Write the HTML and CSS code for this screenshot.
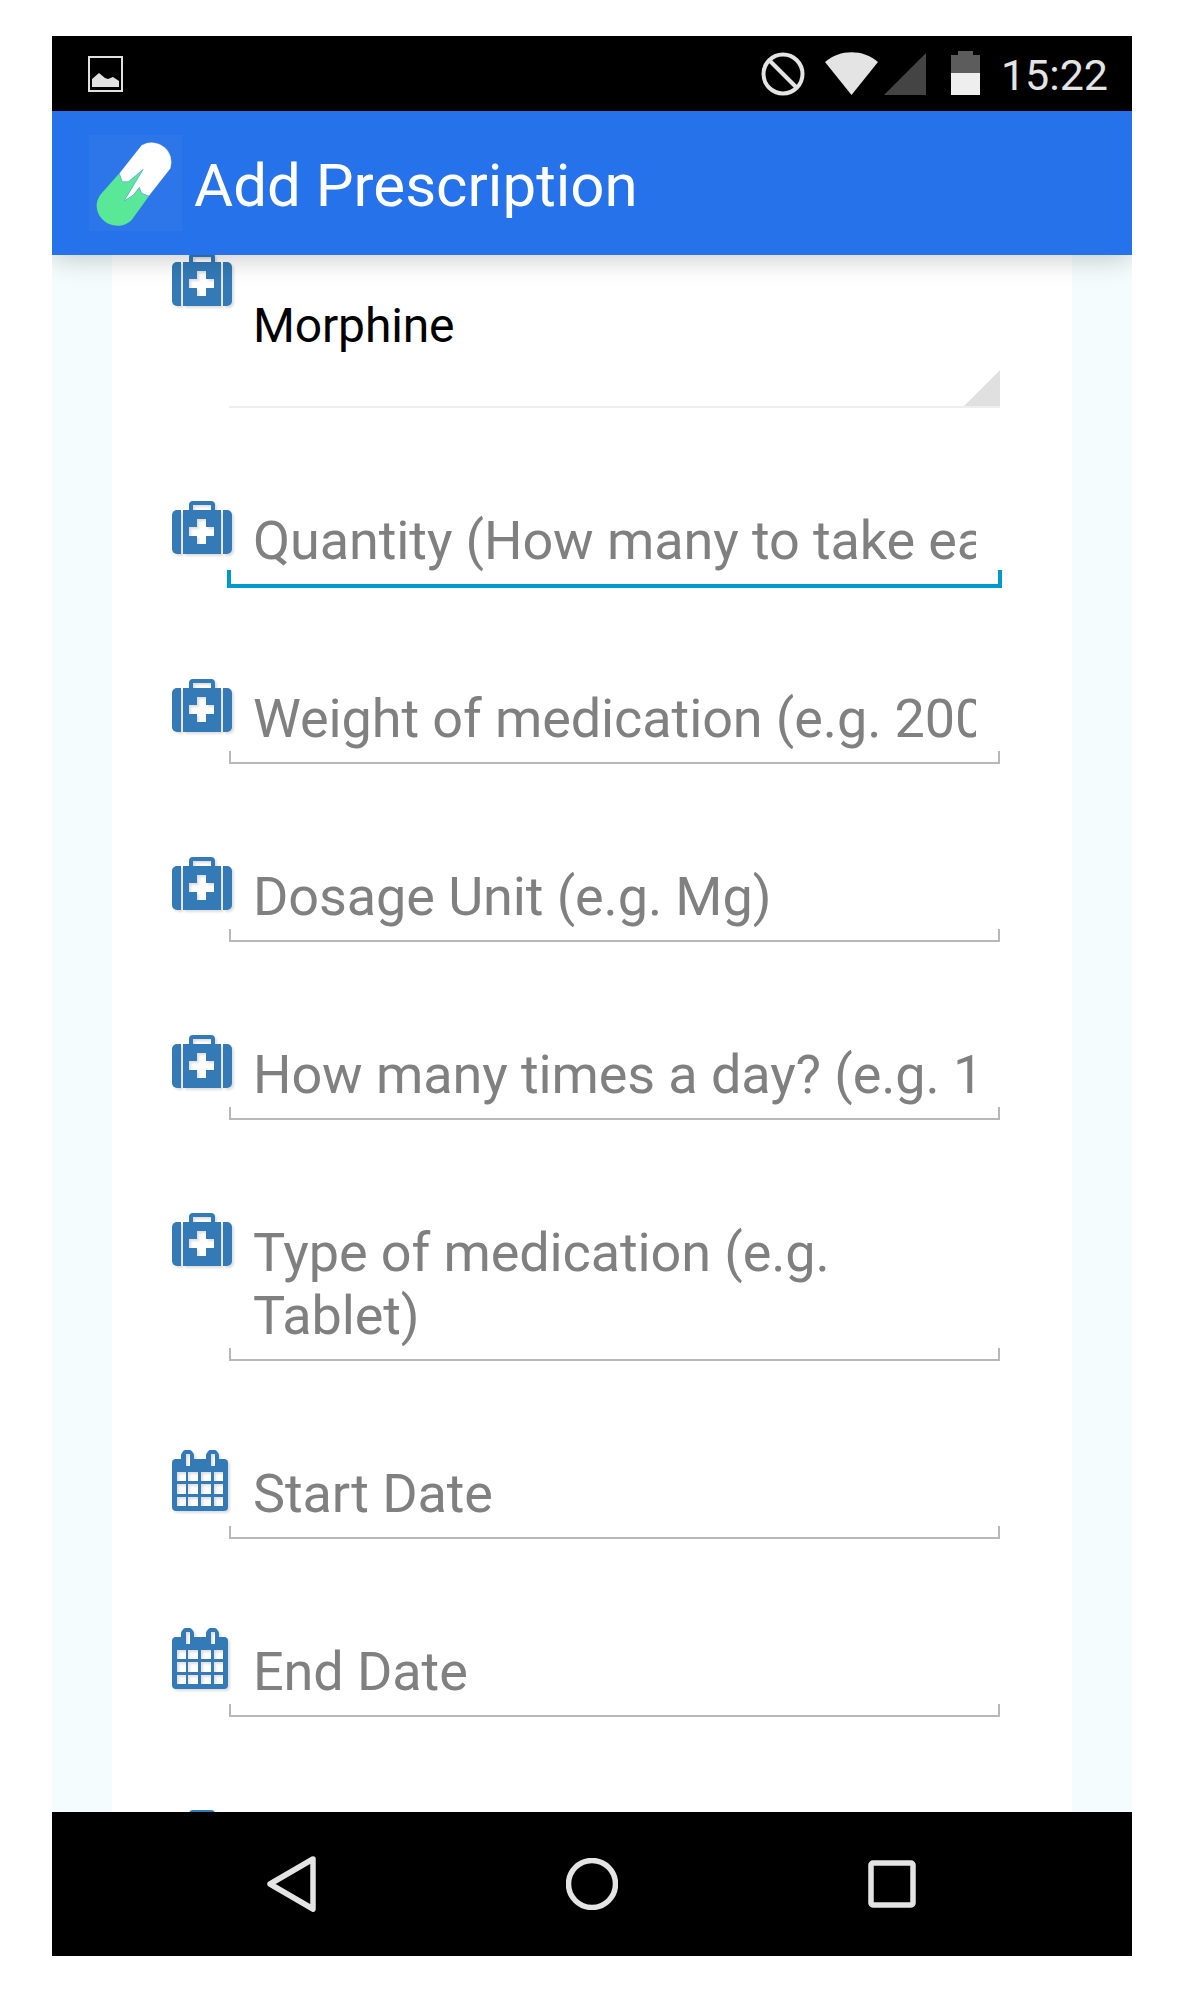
FILE: index.html
```html
<!DOCTYPE html>
<html lang="en">
<head>
<meta charset="utf-8">
<title>Add Prescription</title>
<link rel="stylesheet" href="styles.css">
</head>
<body>
<svg class="defs" width="0" height="0" aria-hidden="true">
  <symbol id="bag" viewBox="0 0 60 53">
    <path fill="#337ab7" d="M9 9v44H5a5 5 0 0 1-5-5V14a5 5 0 0 1 5-5z"/>
    <path fill="#337ab7" d="M51 9v44h4a5 5 0 0 0 5-5V14a5 5 0 0 0-5-5z"/>
    <path fill="#337ab7" fill-rule="evenodd" d="M11 9h6V4a4 4 0 0 1 4-4h18a4 4 0 0 1 4 4v5h6v44H11zM21 4v5h18V4zM25 18v8h-8v9h8v8h9v-8h8v-9h-8v-8z"/>
  </symbol>
  <symbol id="cal" viewBox="0 0 56 61">
    <path fill="#337ab7" fill-rule="evenodd" d="M9 9V6a6.500 6.500 0 0 1 13 0v3h12V6a6.500 6.500 0 0 1 13 0v3h5a4 4 0 0 1 4 4v44a4 4 0 0 1-4 4H4a4 4 0 0 1-4-4V13a4 4 0 0 1 4-4zM14 4v12h4V4zM39 4v12h4V4zM5 22v9h9v-9zM16 22v9h10v-9zM29 22v9h10v-9zM42 22v9h9v-9zM5 34v10h9V34zM16 34v10h10V34zM29 34v10h10V34zM42 34v10h9V34zM5 47v9h9v-9zM16 47v9h10v-9zM29 47v9h10v-9zM42 47v9h9v-9z"/>
  </symbol>
</svg>

<div class="phone">
  <div class="status">
    <svg class="st-image" viewBox="0 0 35 36"><rect x="1" y="1" width="33" height="34" fill="none" stroke="#e0e0e0" stroke-width="2"/><path fill="#e0e0e0" d="M4 31V23l7-6 6 5 3 1 5-2 6 4v6z"/></svg>
    <span class="spacer"></span>
    <svg class="st-block" viewBox="0 0 44 44"><circle cx="22" cy="22" r="19.500" fill="none" stroke="#e4e4e4" stroke-width="4"/><path d="M9 9l26 26" stroke="#e4e4e4" stroke-width="4"/></svg>
    <svg class="st-wifi" viewBox="0 0 53 43"><path fill="#e4e4e4" d="M26.500 43L0 10C15 -3 38 -3 53 10z"/></svg>
    <svg class="st-signal" viewBox="0 0 42 42"><path fill="#444" d="M42 0v42H0z"/></svg>
    <svg class="st-battery" viewBox="0 0 29 44"><path fill="#5c5c5c" d="M7 0h15v4h7v18H0V4h7z"/><rect y="22" width="29" height="22" fill="#eee"/></svg>
    <span class="time">15:22</span>
  </div>

  <header class="appbar">
    <div class="logo">
      <svg viewBox="27 15 279 288" width="93" height="96">
        <path fill="#58e897" d="M118 130L127 155L145 155L190 118L133 212L160 195L178 172L185 190L207 198L155 270A62 62 0 0 1 50 228C50 212 58 198 65 190z"/>
        <path fill="#fff" d="M118 130L185 45A60 60 0 0 1 272 115L207 198L185 190L178 172L160 195L133 212L190 118L145 155L127 155z" stroke="#2672ea" stroke-width="1"/>
      </svg>
    </div>
    <h1 class="title">Add Prescription</h1>
  </header>

  <main class="content">
    <form class="card">
      <div class="row">
        <svg class="icon icon-bag"><use href="#bag"/></svg>
        <div class="field field-spinner">
          <div class="value">Morphine</div>
          <span class="corner"></span>
        </div>
      </div>
      <div class="row">
        <svg class="icon icon-bag"><use href="#bag"/></svg>
        <div class="field field-focus"><div class="hint">Quantity (How many to take each day)</div></div>
      </div>
      <div class="row">
        <svg class="icon icon-bag"><use href="#bag"/></svg>
        <div class="field"><div class="hint">Weight of medication (e.g. 200mg)</div></div>
      </div>
      <div class="row">
        <svg class="icon icon-bag"><use href="#bag"/></svg>
        <div class="field"><div class="hint">Dosage Unit (e.g. Mg)</div></div>
      </div>
      <div class="row">
        <svg class="icon icon-bag"><use href="#bag"/></svg>
        <div class="field"><div class="hint">How many times a day? (e.g. 1)</div></div>
      </div>
      <div class="row">
        <svg class="icon icon-bag"><use href="#bag"/></svg>
        <div class="field"><div class="hint hint-wrap">Type of medication (e.g. Tablet)</div></div>
      </div>
      <div class="row">
        <svg class="icon icon-cal"><use href="#cal"/></svg>
        <div class="field"><div class="hint">Start Date</div></div>
      </div>
      <div class="row">
        <svg class="icon icon-cal"><use href="#cal"/></svg>
        <div class="field"><div class="hint">End Date</div></div>
      </div>
      <div class="row">
        <svg class="icon icon-bag"><use href="#bag"/></svg>
      </div>
    </form>
  </main>

  <nav class="navbar">
    <svg class="nav-back" viewBox="0 0 50 56"><path d="M46 3L3 28L46 53z" fill="none" stroke="#e4e4e4" stroke-width="5.500" stroke-linejoin="round"/></svg>
    <svg class="nav-home" viewBox="0 0 52 52"><circle cx="26" cy="26" r="23.500" fill="none" stroke="#e4e4e4" stroke-width="5.500"/></svg>
    <svg class="nav-recent" viewBox="0 0 48 48"><rect x="3" y="3" width="42" height="42" rx="2" fill="none" stroke="#e4e4e4" stroke-width="5.500"/></svg>
  </nav>
</div>
</body>
</html>
```

FILE: styles.css
```css
* { box-sizing: border-box; }

html, body { margin: 0; padding: 0; background: #fff; }

body { font-family: Roboto, "Noto Sans", sans-serif; }

.defs { display: block; height: 0; }

.phone {
  width: 1080px;
  height: 1920px;
  margin: 36px 0 0 52px;
  display: flex;
  flex-direction: column;
  overflow: hidden;
}

/* status bar */
.status {
  height: 75px;
  flex: none;
  background: #000;
  display: flex;
  align-items: flex-start;
  padding: 0 24px 0 36px;
  position: relative;
  z-index: 3;
}
.spacer { flex: 1; }
.st-image { width: 35px; height: 36px; margin-top: 20px; }
.st-block { width: 44px; height: 44px; margin-top: 16px; }
.st-wifi { width: 53px; height: 43px; margin: 16px 0 0 20px; }
.st-signal { width: 42px; height: 42px; margin: 17px 0 0 6px; }
.st-battery { width: 29px; height: 44px; margin: 15px 0 0 25px; }
.time {
  margin: 14px 0 0 21px;
  color: #e4e4e4;
  font-size: 43px;
  line-height: 50px;
}

/* app bar */
.appbar {
  height: 144px;
  flex: none;
  background: #2672ea;
  display: flex;
  align-items: center;
  padding-left: 37px;
  position: relative;
  z-index: 2;
  box-shadow: 0 3px 26px rgba(0, 0, 0, .22);
}
.logo {
  width: 93px;
  height: 96px;
  background: rgba(255, 255, 255, .035);
}
.logo svg { display: block; }
.title {
  margin: 5px 0 0 12px;
  color: #fff;
  font-size: 60px;
  font-weight: 400;
  line-height: 70px;
}

/* content */
.content {
  flex: 1;
  min-height: 0;
  overflow: hidden;
  background: #f4fcfe;
  padding: 0 60px;
}
.card {
  background: #fff;
  margin-top: -2px;
  padding: 0 72px 0 60px;
  height: 1700px;
}

.row {
  display: flex;
  align-items: flex-start;
  margin-bottom: 93px;
}

.icon {
  flex: none;
  width: 60px;
  filter: drop-shadow(2px 2px 1px rgba(0, 0, 0, .13));
}
.icon-bag { height: 53px; margin-right: -3px; }
.icon-cal { width: 56px; height: 61px; margin: -4px 1px 0 0; }

.field {
  flex: 1;
  min-width: 0;
  position: relative;
  padding: 8px 24px 14px 24px;
}
.field::after {
  content: "";
  position: absolute;
  left: 0;
  right: 0;
  bottom: 0;
  height: 11px;
  border: 2px solid #b8b8b8;
  border-top: 0;
}
.field-focus::after {
  left: -2px;
  right: -2px;
  bottom: -2px;
  height: 14px;
  border: 4px solid #0099cc;
  border-top: 0;
}

.hint {
  color: #808080;
  font-size: 54px;
  line-height: 63px;
  letter-spacing: -.1px;
  white-space: nowrap;
  overflow: hidden;
}
.hint-wrap { white-space: normal; }

.field-spinner {
  height: 155px;
  padding: 45px 24px 0 24px;
}
.field-spinner::after {
  height: 2px;
  border: 0;
  background: #eee;
}
.value {
  color: #000;
  font-size: 48px;
  line-height: 56px;
  letter-spacing: -.15px;
}
.corner {
  position: absolute;
  right: 0;
  bottom: 2px;
  width: 0;
  height: 0;
  border-left: 36px solid transparent;
  border-bottom: 36px solid #e0e0e0;
}

/* nav bar */
.navbar {
  height: 144px;
  flex: none;
  background: #000;
  display: grid;
  grid-template-columns: repeat(3, 300px);
  padding-left: 90px;
  align-items: center;
  justify-items: center;
  position: relative;
  z-index: 2;
}
.nav-back { width: 50px; height: 56px; }
.nav-home { width: 52px; height: 52px; }
.nav-recent { width: 48px; height: 48px; }
```
